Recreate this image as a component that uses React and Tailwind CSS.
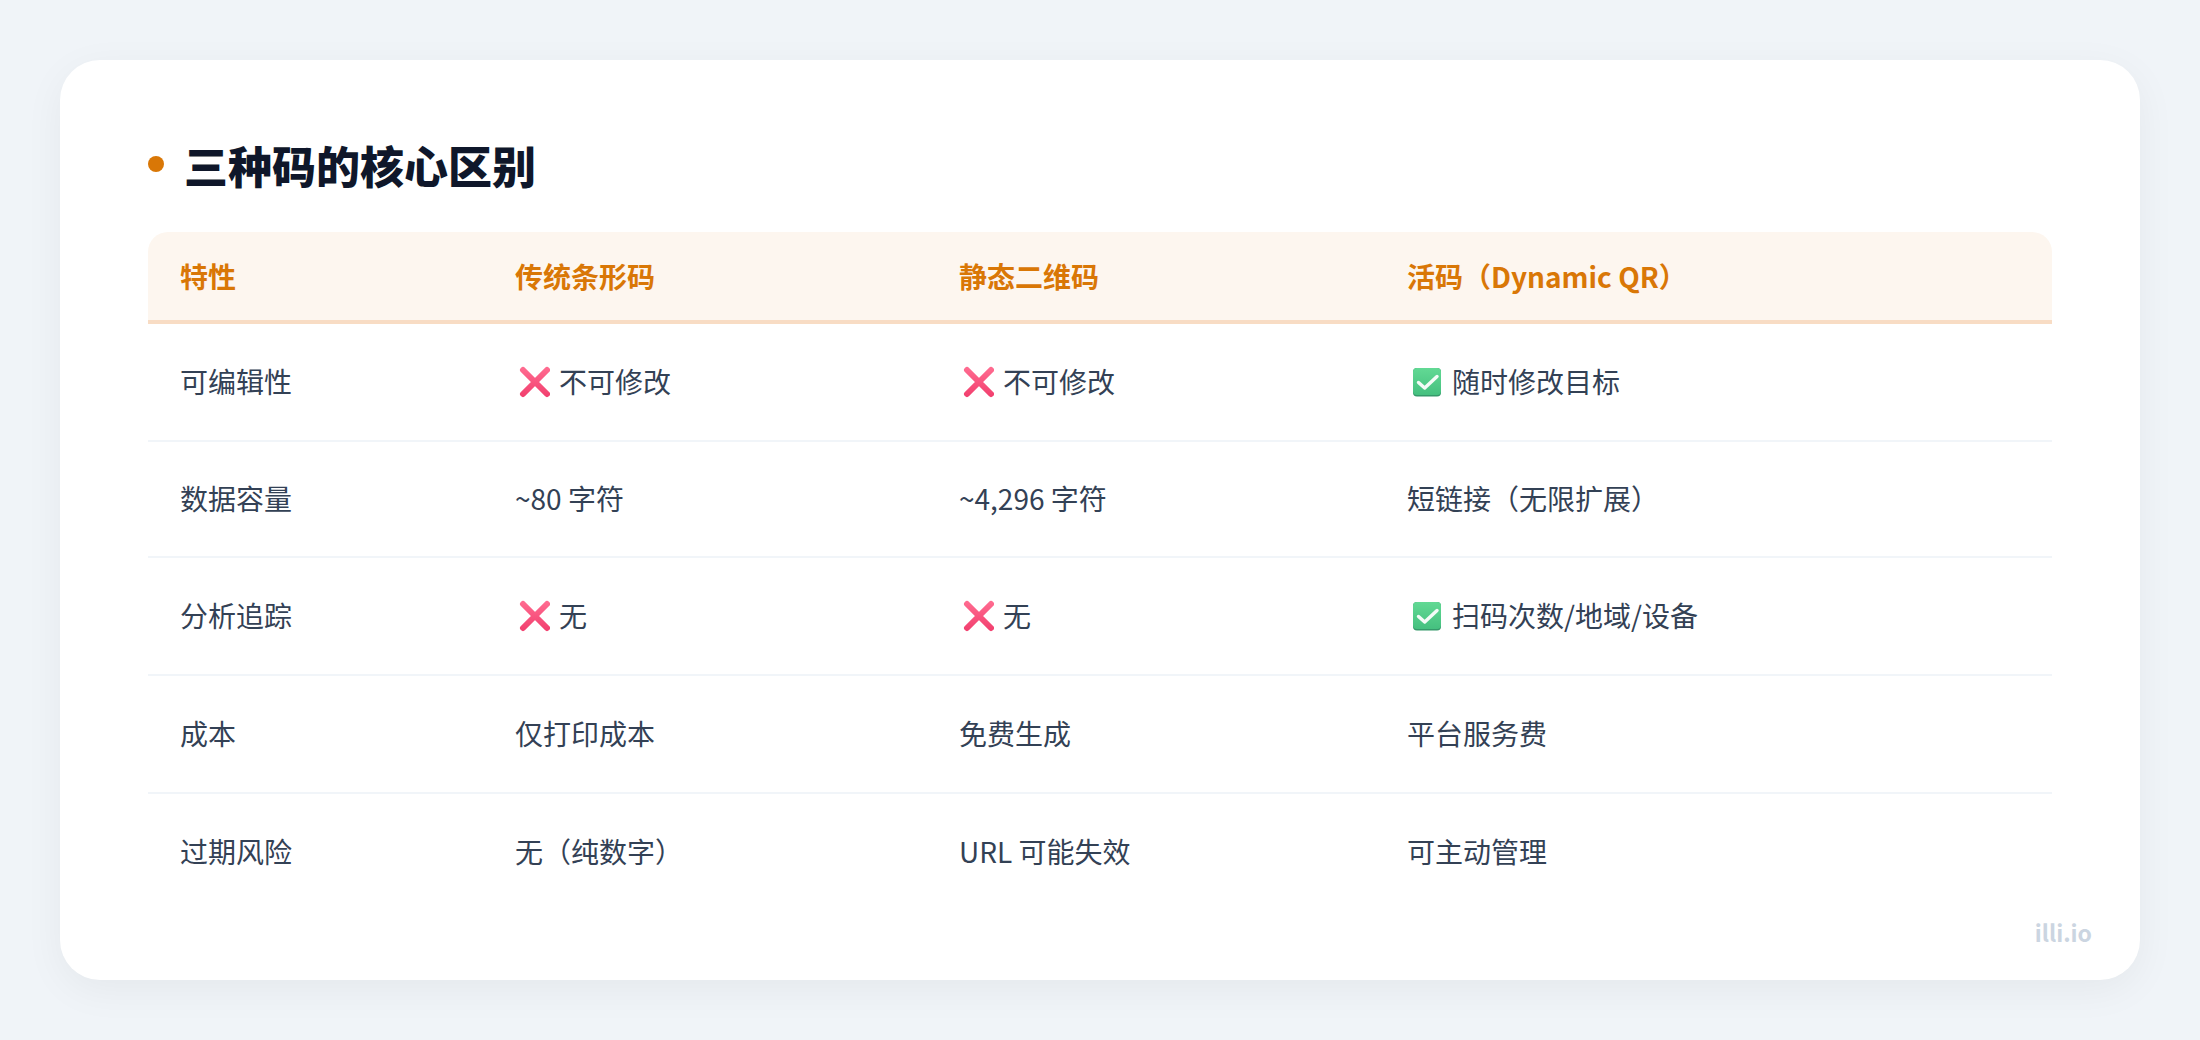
const rows = [
  { h: "h-[118px]", c: ["可编辑性", ["x", "不可修改"], ["x", "不可修改"], ["c", "随时修改目标"]] },
  { h: "h-[116px]", c: ["数据容量", "~80 字符", "~4,296 字符", "短链接（无限扩展）"] },
  { h: "h-[118px]", c: ["分析追踪", ["x", "无"], ["x", "无"], ["c", "扫码次数/地域/设备"]] },
  { h: "h-[118px]", c: ["成本", "仅打印成本", "免费生成", "平台服务费"] },
  { h: "h-[116px]", c: ["过期风险", "无（纯数字）", "URL 可能失效", "可主动管理"] },
];
const heads = ["特性", "传统条形码", "静态二维码", "活码（Dynamic QR）"];
const widths = ["w-[335px]", "w-[444px]", "w-[448px]", "w-[677px]"];

function CrossIcon() {
  return (
    <svg viewBox="0 0 32 32" className="w-8 h-8 ml-[3px] mr-[9px] mt-[2px] shrink-0" aria-hidden="true">
      <defs>
        <linearGradient id="crossGrad" gradientUnits="userSpaceOnUse" x1="0" y1="2" x2="0" y2="30">
          <stop offset="0" stopColor="#ff6b90" />
          <stop offset="1" stopColor="#f2406f" />
        </linearGradient>
      </defs>
      <path d="M5 4 L29 28 M29 4 L5 28" stroke="url(#crossGrad)" strokeWidth="6" strokeLinecap="round" fill="none" />
    </svg>
  );
}

function CheckIcon() {
  return (
    <svg viewBox="0 0 32 32" className="w-8 h-8 ml-[3px] mr-[10px] mt-[2px] shrink-0" aria-hidden="true">
      <defs>
        <linearGradient id="checkGrad" x1="0" y1="0" x2="0" y2="1">
          <stop offset="0" stopColor="#62d994" />
          <stop offset="1" stopColor="#45c07f" />
        </linearGradient>
      </defs>
      <rect x="3" y="2" width="28" height="28.5" rx="4" fill="#35996a" />
      <rect x="3" y="2" width="28" height="27" rx="4" fill="url(#checkGrad)" />
      <path d="M8.5 16.5 L14.7 22 L27 10.5" stroke="#f4fbf7" strokeWidth="3.4" strokeLinecap="round" strokeLinejoin="round" fill="none" />
    </svg>
  );
}

function Cell({ value }) {
  if (typeof value === "string") return value;
  return (
    <div className="flex items-center">
      {value[0] === "x" ? <CrossIcon /> : <CheckIcon />}
      <span>{value[1]}</span>
    </div>
  );
}

export default function App() {
  return (
    <div className="w-[2200px] h-[1040px] bg-[#f0f4f8] p-[60px] font-['Noto_Sans_CJK_SC',sans-serif]">
      <div className="relative h-[920px] rounded-[40px] bg-white px-[88px] pt-[73px] shadow-[0_10px_40px_rgba(0,0,0,0.05)]">
        <div className="flex items-start gap-[20px] mb-[35px] h-[64px]">
          <span className="w-4 h-4 mt-[23px] rounded-full bg-[#d97706]" />
          <h2 className="text-[44px] font-black leading-[64px] text-[#0f172a]">三种码的核心区别</h2>
        </div>
        <table className="w-[1904px] table-fixed border-separate border-spacing-0 text-[28px] text-[#334155]">
          <thead>
            <tr>
              {heads.map((h, i) => (
                <th
                  key={i}
                  className={
                    widths[i] +
                    " h-[92px] px-8 pb-px text-left font-bold text-[#d97706] bg-[#fdf6ef] border-b-4 border-[#f8dcc4] " +
                    (i === 0 ? "rounded-tl-[20px]" : i === 3 ? "rounded-tr-[20px]" : "")
                  }
                >
                  {h}
                </th>
              ))}
            </tr>
          </thead>
          <tbody>
            {rows.map((r, i) => (
              <tr key={i}>
                {r.c.map((c, j) => (
                  <td key={j} className={r.h + " px-8 pb-[2px] " + (i < 4 ? "border-b-2 border-[#f1f5f9]" : "")}>
                    <Cell value={c} />
                  </td>
                ))}
              </tr>
            ))}
          </tbody>
        </table>
        <div className="absolute right-[48px] bottom-[31px] text-[23px] font-bold text-[#cbd5e1]">illi.io</div>
      </div>
    </div>
  );
}
